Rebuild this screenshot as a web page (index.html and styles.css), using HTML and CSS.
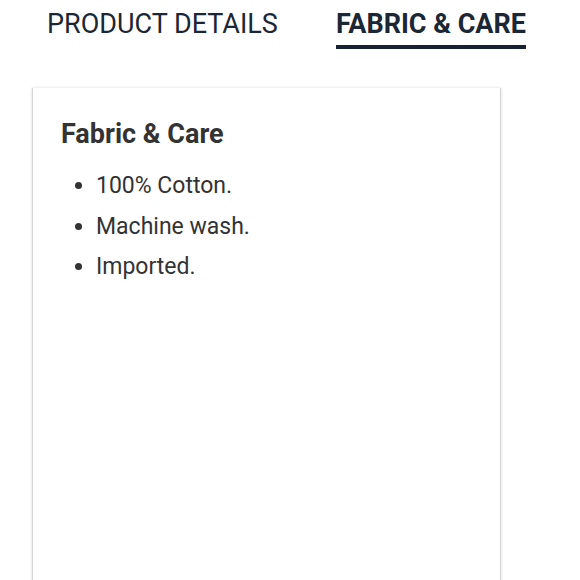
FILE: index.html
```html
<!DOCTYPE html>
<html>
<head>
<meta charset="utf-8">
<link rel="stylesheet" href="styles.css">
</head>
<body>
<div class="page">
  <nav class="tabs">
    <div class="tab">PRODUCT DETAILS</div>
    <div class="tab active">FABRIC &amp; CARE</div>
  </nav>
  <section class="card">
    <h2 class="card-title">Fabric &amp; Care</h2>
    <ul class="card-list">
      <li>100% Cotton.</li>
      <li>Machine wash.</li>
      <li>Imported.</li>
    </ul>
  </section>
</div>
</body>
</html>
```

FILE: styles.css
```css
html, body {
  margin: 0;
  padding: 0;
  background: #ffffff;
  font-family: Roboto, "Liberation Sans", sans-serif;
}
.page {
  width: 580px;
  height: 580px;
  overflow: hidden;
}
.tabs {
  display: flex;
  padding: 7px 0 0 47px;
  gap: 58px;
}
.tab {
  font-size: 27px;
  line-height: 34px;
  color: #1c2736;
  padding-bottom: 4px;
  border-bottom: 4px solid transparent;
}
.tab.active {
  font-weight: 700;
  border-bottom-color: #172335;
}
.card {
  margin: 39px 0 0 32px;
  width: 469px;
  height: 520px;
  box-sizing: border-box;
  padding: 30px 28px;
  background: #fff;
  border-left: 1px solid #d4d4d4;
  border-right: 1px solid #d4d4d4;
  box-shadow: 0 0 3px rgba(0,0,0,0.15);
}
.card-title {
  margin: 0;
  font-size: 27px;
  line-height: 32px;
  font-weight: 700;
  color: #333333;
}
.card-list {
  margin: 16px 0 0 0;
  padding-left: 35px;
  font-size: 23px;
  line-height: 40.5px;
  color: #333333;
}
```
